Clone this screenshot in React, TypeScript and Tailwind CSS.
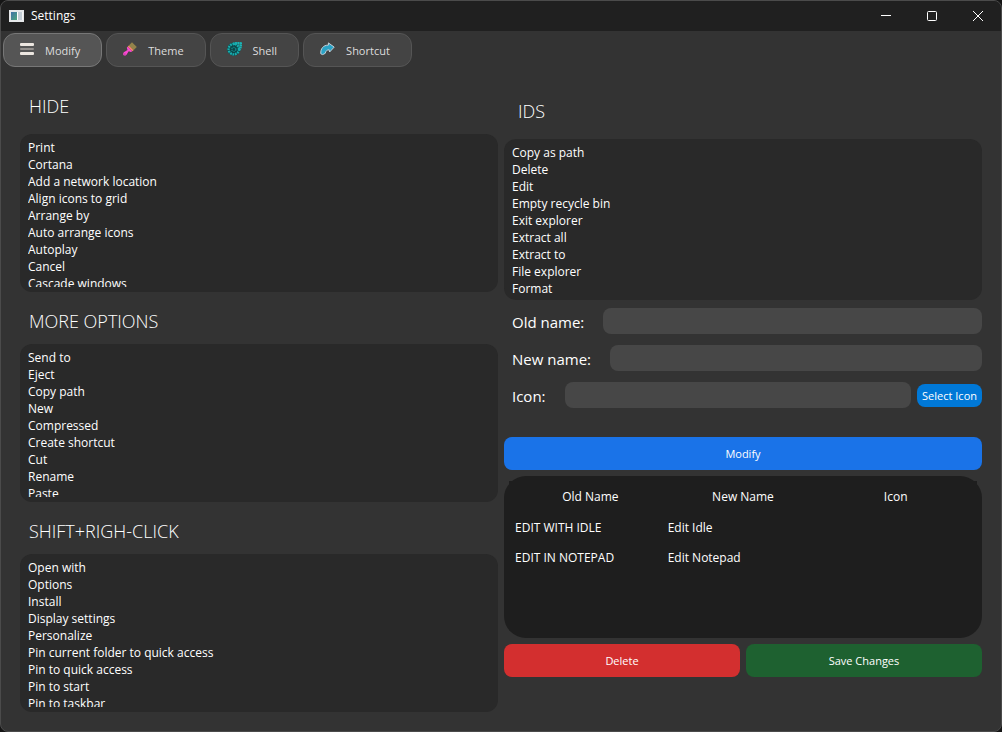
import { useState } from "react";
import type { ReactNode } from "react";

const hideItems = [
  "Print",
  "Cortana",
  "Add a network location",
  "Align icons to grid",
  "Arrange by",
  "Auto arrange icons",
  "Autoplay",
  "Cancel",
  "Cascade windows",
];

const moreItems = [
  "Send to",
  "Eject",
  "Copy path",
  "New",
  "Compressed",
  "Create shortcut",
  "Cut",
  "Rename",
  "Paste",
];

const shiftItems = [
  "Open with",
  "Options",
  "Install",
  "Display settings",
  "Personalize",
  "Pin current folder to quick access",
  "Pin to quick access",
  "Pin to start",
  "Pin to taskbar",
];

const idItems = [
  "Copy as path",
  "Delete",
  "Edit",
  "Empty recycle bin",
  "Exit explorer",
  "Extract all",
  "Extract to",
  "File explorer",
  "Format",
];

const changes = [
  { oldName: "EDIT WITH IDLE", newName: "Edit Idle", icon: "" },
  { oldName: "EDIT IN NOTEPAD", newName: "Edit Notepad", icon: "" },
];

const AppIcon = () => (
  <svg width="15" height="13" viewBox="0 0 15 13" aria-hidden="true">
    <defs>
      <linearGradient id="screen" x1="0" y1="0" x2="1" y2="1">
        <stop offset="0" stopColor="#3f72a8" />
        <stop offset="1" stopColor="#4fa67c" />
      </linearGradient>
    </defs>
    <rect width="15" height="12" fill="#e6e8ea" />
    <rect x="2" y="2" width="6" height="8" fill="url(#screen)" />
    <rect x="8" y="2" width="1" height="8" fill="#ffffff" />
    <rect x="9" y="2" width="4" height="8" fill="#c3cdd5" />
    <rect x="13" y="2" width="1" height="8" fill="#f5f5f5" />
  </svg>
);

const MenuIcon = () => (
  <svg width="14" height="14" viewBox="0 0 14 14" aria-hidden="true">
    <rect y="1" width="14" height="3" rx="1" fill="#ece6e0" />
    <rect y="6" width="14" height="2" rx="1" fill="#938f8c" />
    <rect y="10" width="14" height="3" rx="1" fill="#ece6e0" />
  </svg>
);

const BrushIcon = () => (
  <svg width="14" height="14" viewBox="0 0 14 14" aria-hidden="true">
    <path d="M9 0.3 L13.8 5 L10.6 8.2 L5.8 3.4 Z" fill="#93834a" />
    <path d="M5.8 3.4 L10.6 8.2 L9.3 9.2 L4.7 4.7 Z" fill="#fa8a6a" />
    <path
      d="M4.7 4.7 L9.3 9.2 L7.9 10.1 L5.7 9.3 L3.5 12.7 C2.4 14 0.8 13.8 0.3 12.7 C-0.1 11.7 0.3 10.8 1.2 10.1 L4.5 8 L3.8 5.8 Z"
      fill="#fb47d2"
    />
    <circle cx="1.9" cy="12" r="0.6" fill="#7c3470" />
  </svg>
);

const ShellIcon = () => (
  <svg width="15" height="14" viewBox="0 0 15 14" aria-hidden="true">
    <circle cx="6.8" cy="7.2" r="6.6" fill="#0d4547" />
    <path
      d="M6 1.9 C9 0.9 12 1 13.8 1.5 C14 4 13.2 6.6 11.8 8.4"
      fill="none"
      stroke="#19b5b6"
      strokeWidth="2.6"
      strokeDasharray="1.8 0.4"
    />
    <circle
      cx="6.8"
      cy="7.2"
      r="5.2"
      fill="none"
      stroke="#17acae"
      strokeWidth="2.4"
      strokeDasharray="1.8 0.7"
    />
    <circle
      cx="6.8"
      cy="7.4"
      r="2"
      fill="none"
      stroke="#148486"
      strokeWidth="1.4"
      strokeDasharray="1.3 0.7"
    />
  </svg>
);

const ArrowIcon = () => (
  <svg width="15" height="14" viewBox="0 0 15 14" aria-hidden="true">
    <path
      d="M0.8 11.8 C0.4 6.8 3.2 3.1 8.4 3.1 L8.4 0.9 L14.2 5.1 L9.6 10 L9.2 7.8 C7 7.8 5.6 9 5.2 11.4 L2.6 12.6 Z"
      fill="#2ba3c6"
      stroke="#c3d0da"
      strokeWidth="1"
      strokeLinejoin="round"
    />
  </svg>
);

const tabs = [
  { name: "Modify", icon: <MenuIcon /> },
  { name: "Theme", icon: <BrushIcon /> },
  { name: "Shell", icon: <ShellIcon /> },
  { name: "Shortcut", icon: <ArrowIcon /> },
];

const ItemList = ({ items, label, className }: { items: string[]; label: string; className: string }) => (
  <div className={`rounded-xl bg-[#292929] px-2 py-[5px] ${className}`}>
    <ul aria-label={label} className="h-full overflow-hidden text-[12px] leading-[17px] text-white">
      {items.map((item) => (
        <li key={item}>{item}</li>
      ))}
    </ul>
  </div>
);

const Field = ({ id, label, children }: { id: string; label: string; children?: ReactNode }) => (
  <div className="flex items-center">
    <label htmlFor={id} className="ml-2 mr-[19px] pt-0.5 text-[15px] leading-6 text-white">
      {label}
    </label>
    <input id={id} type="text" className="h-[26px] min-w-0 flex-1 rounded-lg bg-[#474747] px-2 text-xs text-white outline-none" />
    {children}
  </div>
);

export default function App() {
  const [active, setActive] = useState("Modify");

  return (
    <div className="min-h-screen bg-[#151515] font-['Open_Sans','Noto_Sans',sans-serif]">
      <div className="flex min-h-screen flex-col overflow-hidden rounded-lg border border-[#4b4b4b] bg-[#333333]">
        {/* Title bar */}
        <header className="flex h-[30px] items-center justify-between bg-[#202020] pl-2 text-white">
          <div className="flex items-center gap-[7px]">
            <AppIcon />
            <h1 className="text-[12px] leading-4">Settings</h1>
          </div>
          <div className="flex">
            <button aria-label="Minimize" className="flex h-7 w-[46px] items-center justify-center">
              <svg width="10" height="10" viewBox="0 0 10 10" stroke="#fff">
                <path d="M0 4.5H10" />
              </svg>
            </button>
            <button aria-label="Maximize" className="flex h-7 w-[46px] items-center justify-center">
              <svg width="10" height="10" viewBox="0 0 10 10" fill="none" stroke="#fff">
                <rect x="0.5" y="0.5" width="9" height="9" rx="1" />
              </svg>
            </button>
            <button aria-label="Close" className="flex h-7 w-[46px] items-center justify-center">
              <svg width="10" height="10" viewBox="0 0 10 10" stroke="#fff">
                <path d="M0 0L10 10M10 0L0 10" />
              </svg>
            </button>
          </div>
        </header>

        {/* Tabs */}
        <nav className="flex gap-1 px-0.5 pt-0.5">
          {tabs.map((tab) => (
            <button
              key={tab.name}
              onClick={() => setActive(tab.name)}
              className={`flex h-[34px] items-center gap-[11px] rounded-xl border pl-4 pr-[21px] text-[11px] text-[#dddddd] ${
                active === tab.name ? "border-[#777777] bg-[#555555]" : "border-[#555555] bg-[#444444]"
              }`}
            >
              <span className="pb-0.5">{tab.icon}</span>
              <span className="pt-0.5">{tab.name}</span>
            </button>
          ))}
        </nav>

        <main className="grid flex-1 grid-cols-2 gap-1.5 px-[19px] pb-[19px]">
          {/* Left column */}
          <div className="pt-[27px] text-white">
            <h2 className="mb-4 pl-[9px] text-[18px] font-light leading-6">HIDE</h2>
            <ItemList items={hideItems} label="Hide" className="h-[158px]" />
            <h2 className="mb-[11px] mt-[17px] pl-[9px] text-[18px] font-light leading-6">MORE OPTIONS</h2>
            <ItemList items={moreItems} label="More options" className="h-[158px]" />
            <h2 className="mb-[11px] mt-[17px] pl-[9px] text-[18px] font-light leading-6">SHIFT+RIGH-CLICK</h2>
            <ItemList items={shiftItems} label="Shift and right click" className="h-[158px]" />
          </div>

          {/* Right column */}
          <div className="pt-8 text-white">
            <h2 className="mb-4 pl-3.5 text-[18px] font-light leading-6">IDS</h2>
            <ItemList items={idItems} label="IDs" className="h-[161px]" />

            <form className="mt-2" onSubmit={(e) => e.preventDefault()}>
              <div className="flex flex-col gap-[11px]">
                <Field id="old-name" label="Old name:" />
                <Field id="new-name" label="New name:" />
                <Field id="icon" label="Icon:">
                  <button type="button" className="ml-1.5 h-[23px] rounded-lg bg-[#0078d7] px-[5px] pt-0.5 text-[11px]">
                    Select Icon
                  </button>
                </Field>
              </div>
              <button type="submit" className="mt-[29px] h-[33px] w-full rounded-lg bg-[#1a73e8] pt-0.5 text-[11px]">
                Modify
              </button>
            </form>

            <div className="mt-1.5 h-[162px] rounded-[22px] bg-[#1e1e1e] p-[5px]">
              {/* Header fill runs square into the rounded corners */}
              <div className="bg-[#1e1e1e] px-[5px]">
                <table className="w-full table-fixed text-[12px]">
                  <thead>
                    <tr className="h-8">
                      <th className="p-0 text-center font-normal">Old Name</th>
                      <th className="p-0 text-center font-normal">New Name</th>
                      <th className="p-0 text-center font-normal">Icon</th>
                    </tr>
                  </thead>
                  <tbody>
                    {changes.map((row) => (
                      <tr key={row.oldName} className="h-[30px]">
                        <td className="px-px py-0">{row.oldName}</td>
                        <td className="px-px py-0">{row.newName}</td>
                        <td className="px-px py-0">{row.icon}</td>
                      </tr>
                    ))}
                  </tbody>
                </table>
              </div>
            </div>

            <div className="mt-1.5 grid grid-cols-2 gap-1.5">
              <button className="h-[33px] rounded-lg bg-[#d32f2f] pt-0.5 text-[11px]">Delete</button>
              <button className="h-[33px] rounded-lg bg-[#1e6130] pt-0.5 text-[11px]">Save Changes</button>
            </div>
          </div>
        </main>
      </div>
    </div>
  );
}
